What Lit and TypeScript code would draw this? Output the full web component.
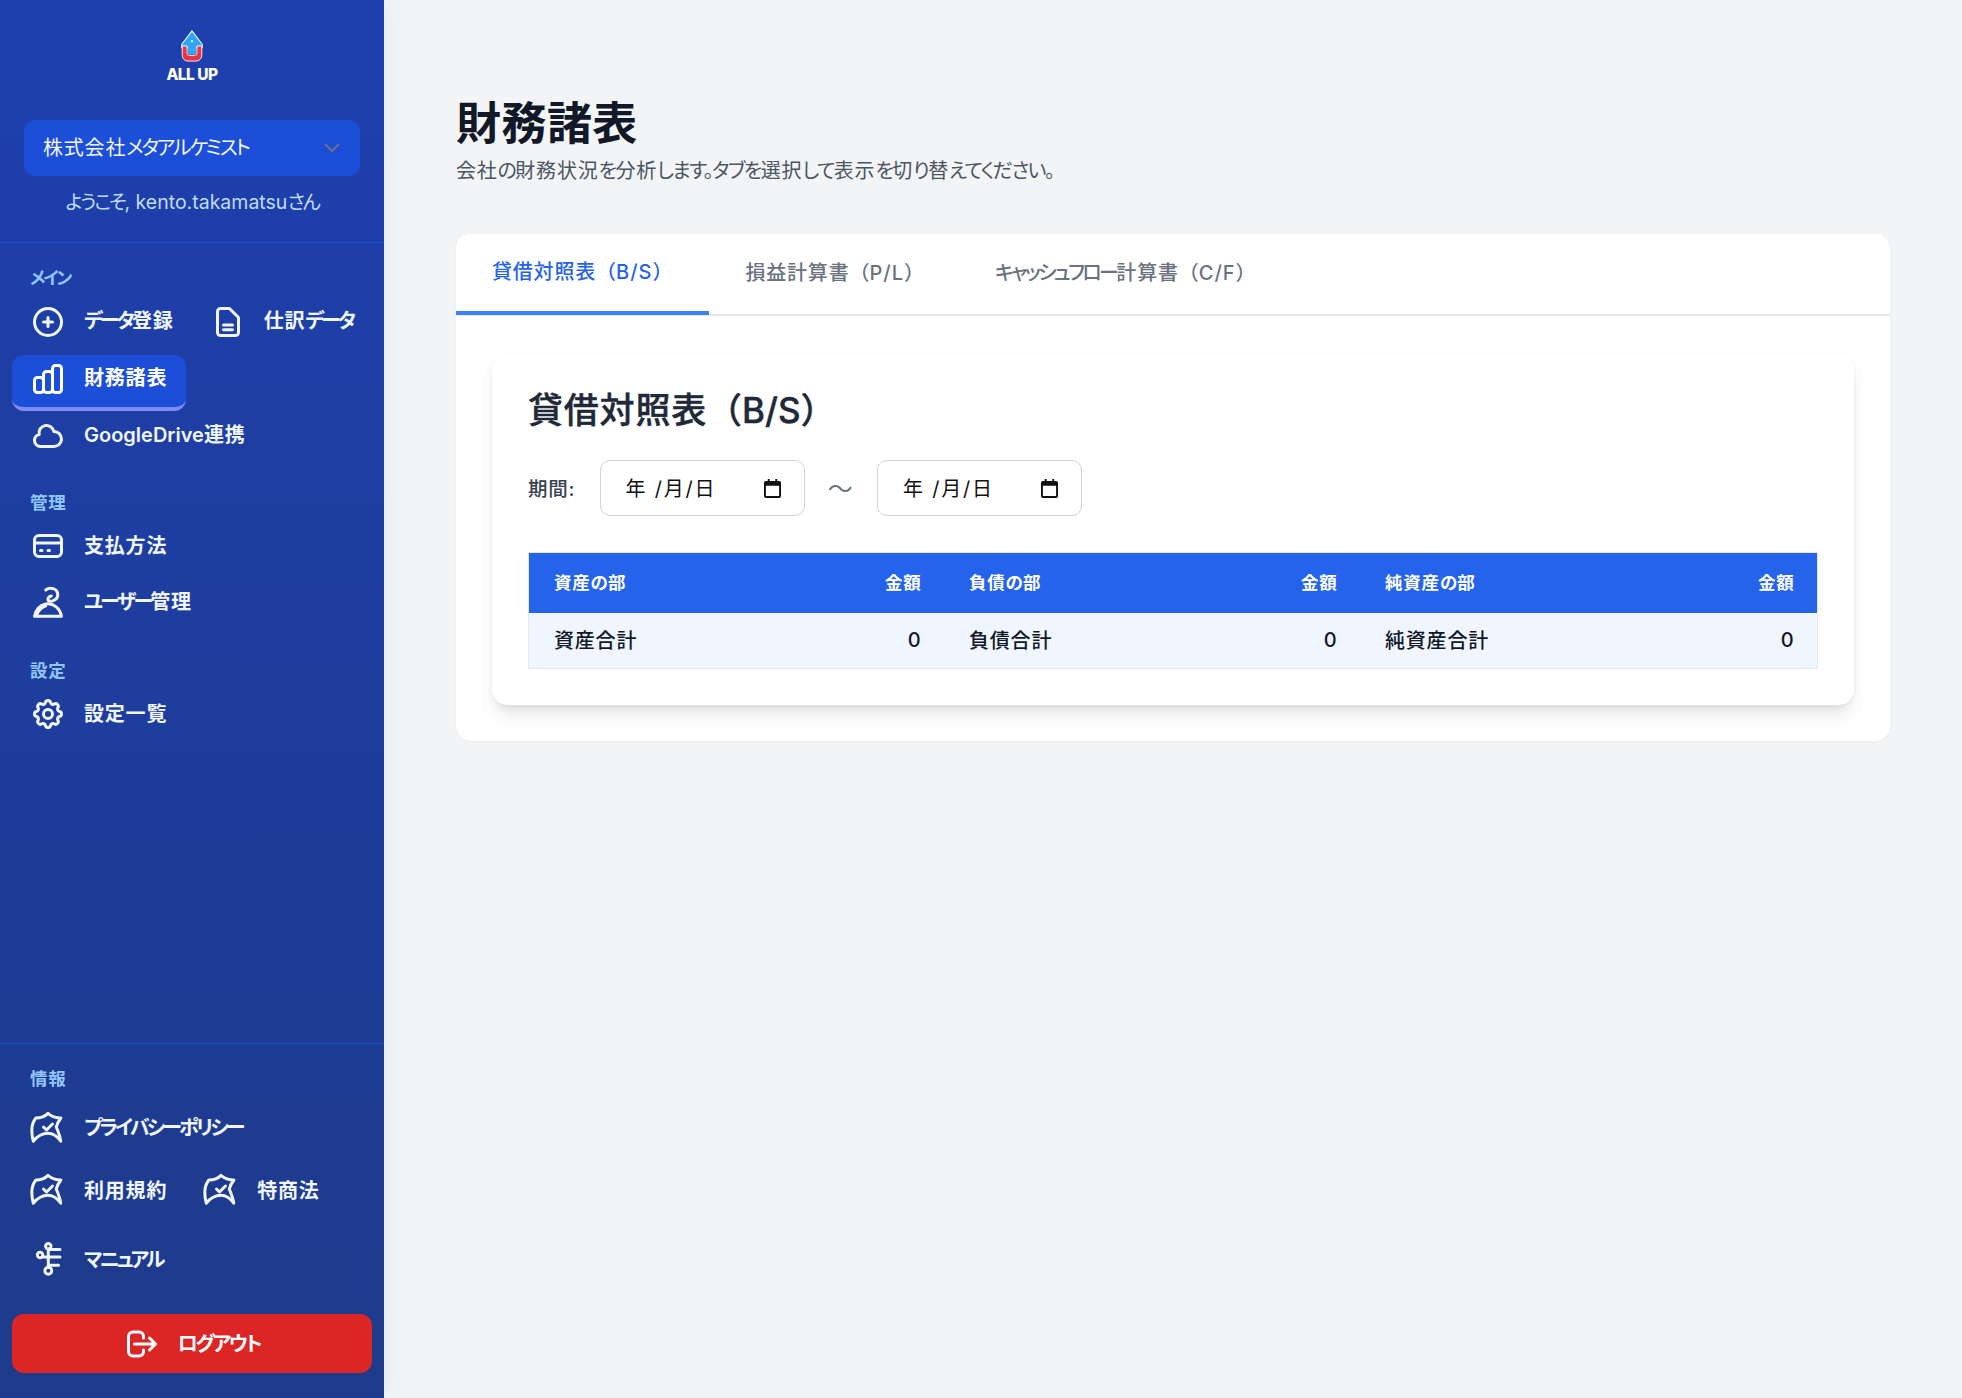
import { LitElement, html, css, svg } from "lit";
import { customElement } from "lit/decorators.js";

const shield = svg`<path d="M20.6 6C17 6 14.500 5 12 2.900 10 5 7 6 3.900 6 2 8.500 1.200 11 1.200 14c0 3 .4 5.500 1 7.500C5 18 8.500 16.200 12 16.200c3 0 6 1.800 8.500 5.300-.5-3.500-1.500-6-3-9.500.5-2.200 1.700-4.200 3.100-6z"/><path d="M9 12l2 2 4-4"/>`;

const icons: Record<string, any> = {
  plus: svg`<path d="M12 9v3m0 0v3m0-3h3m-3 0H9m12 0a9 9 0 11-18 0 9 9 0 0118 0z"/>`,
  doc: svg`<path d="M9 14h6m-6 3.200h6M17 21H7a2 2 0 01-2-2V5a2 2 0 012-2h5.586a1 1 0 01.707.293l5.414 5.414a1 1 0 01.293.707V19a2 2 0 01-2 2z"/>`,
  chart: svg`<path d="M9 19v-6a2 2 0 00-2-2H5a2 2 0 00-2 2v6a2 2 0 002 2h2a2 2 0 002-2zm0 0V9a2 2 0 012-2h2a2 2 0 012 2v10m-6 0a2 2 0 002 2h2a2 2 0 002-2m0 0V5a2 2 0 012-2h2a2 2 0 012 2v14a2 2 0 01-2 2h-2a2 2 0 01-2-2z"/>`,
  cloud: svg`<path d="M3 15a4 4 0 004 4h9a5 5 0 10-.1-9.999 5.002 5.002 0 10-9.780 2.096A4.001 4.001 0 003 15z"/>`,
  card: svg`<path d="M3 10h18M7 15h1m4 0h1m-7 4h12a3 3 0 003-3V8a3 3 0 00-3-3H6a3 3 0 00-3 3v8a3 3 0 003 3z"/>`,
  user: svg`<path d="M10.500 4C13 2 18.300 2.500 18.500 7c.1 3-3 4.900-5.800 4.400-1.300-.7-.8-3.100 1.500-3.400"/><path d="M3 21.500c.8-4.500 4-7.300 7.500-8.200 5-1 9.500 3 10.500 8.200zM4.500 20.500c1.200-3 3-5 6-6"/>`,
  gear: svg`<path d="M10.325 4.317c.426-1.756 2.924-1.756 3.350 0a1.724 1.724 0 002.573 1.066c1.543-.94 3.310.826 2.370 2.370a1.724 1.724 0 001.065 2.572c1.756.426 1.756 2.924 0 3.350a1.724 1.724 0 00-1.066 2.573c.94 1.543-.826 3.310-2.370 2.370a1.724 1.724 0 00-2.572 1.065c-.426 1.756-2.924 1.756-3.350 0a1.724 1.724 0 00-2.573-1.066c-1.543.94-3.310-.826-2.370-2.370a1.724 1.724 0 00-1.065-2.572c-1.756-.426-1.756-2.924 0-3.350a1.724 1.724 0 001.066-2.573c-.94-1.543.826-3.310 2.370-2.370.996.608 2.296.07 2.572-1.065z"/><path d="M15 12a3 3 0 11-6 0 3 3 0 016 0z"/>`,
  shield,
  manual: svg`<circle cx="12.200" cy="3.500" r="1.800"/><circle cx="6.700" cy="9.300" r="1.800"/><circle cx="12.200" cy="19.800" r="2.300"/><path d="M12.200 5.300v12.200M13.300 5.600H20M8.800 10.600H20M13.300 16.200H19"/>`,
  logout: svg`<path d="M17 16l4-4m0 0l-4-4m4 4H7m6 4v1a3 3 0 01-3 3H6a3 3 0 01-3-3V7a3 3 0 013-3h4a3 3 0 013 3v1"/>`,
};

const ic = (name: string) =>
  html`<svg class="ic" viewBox="0 0 24 24" fill="none" stroke="currentColor" stroke-width="2" stroke-linecap="round" stroke-linejoin="round">${icons[name]}</svg>`;

const calendar = html`<svg class="cal" viewBox="0 0 18 20"><path fill="#111" d="M4 0h2v2h6V0h2v2h2a2 2 0 012 2v14a2 2 0 01-2 2H2a2 2 0 01-2-2V4a2 2 0 012-2h2zM2 7v11h14V7z"/></svg>`;

/* The reference face sets kana tight and kanji slightly open: runs get their own tracking. */
const jp = (text: string) =>
  (text.match(/[\u3000-\u30ff]+|[\x20-\x7e]+|[（）]+|[^\u3000-\u30ff\x20-\x7e（）]+/g) || []).map((run) => {
    if (/^[\u3000-\u30ff]/.test(run)) return html`<span class="k">${run}</span>`;
    if (/^[\x20-\x7e]/.test(run)) return html`<span class="l">${run}</span>`;
    if (/^[（）]/.test(run)) return html`<span class="f">${run}</span>`;
    return run;
  });

@customElement("app-root")
export class AppRoot extends LitElement {
  static styles = css`
    :host {
      display: block;
      font-family: Inter, "Noto Sans CJK JP", sans-serif;
      font-feature-settings: "palt";
      letter-spacing: 0.05em;
      color: #111827;
    }
    * { box-sizing: border-box; }
    .k { letter-spacing: -0.11em; }
    .l { letter-spacing: 0; }
    .f { font-feature-settings: normal; letter-spacing: 0; }
    .layout { display: flex; height: 1398px; background: #f3f4f6; overflow: hidden; }

    .sidebar {
      width: 384px;
      flex: none;
      display: flex;
      flex-direction: column;
      color: #fff;
      background: linear-gradient(180deg, #1e40af 0%, #1e3a8a 100%);
      box-shadow: 0 0 30px rgba(0, 0, 0, 0.06);
    }
    .head {
      height: 243px;
      padding: 30px 24px 0;
      border-bottom: 1px solid #1d4ed8;
      display: flex;
      flex-direction: column;
      align-items: stretch;
    }
    .logo { height: 54px; display: flex; flex-direction: column; align-items: center; margin-bottom: 36px; }
    .logo svg { width: 26px; height: 36px; display: block; margin-bottom: 4px; }
    .logo span { font-size: 15.5px; line-height: 18px; font-weight: 800; letter-spacing: -0.5px; color: #fff; }
    .select {
      height: 56px;
      background: #1d4ed8;
      border-radius: 12px;
      padding: 0 20px 0 19px;
      display: flex;
      align-items: center;
      justify-content: space-between;
      font-size: 20px;
      color: #eff6ff;
    }
    .select > span { padding-bottom: 4px; }
    .select svg { width: 16px; height: 10px; }
    .welcome { margin-top: 14px; line-height: 25px; text-align: center; font-size: 19.5px; color: #bfdbfe; }

    .nav { flex: 1; padding-top: 25px; }
    .label {
      height: 20px;
      line-height: 20px;
      margin: 0 0 5px 30px;
      font-size: 17.5px;
      font-weight: 600;
      color: #93c5fd;
    }
    .label .k { letter-spacing: -0.14em; }
    .label.l1 { margin-top: 29px; margin-bottom: 5px; }
    .label.l2 { margin-top: 31px; margin-bottom: 5px; }
    .row { display: flex; padding-left: 12px; }
    .item {
      height: 57px;
      padding: 0 18px;
      display: flex;
      align-items: center;
      gap: 18px;
      font-size: 20px;
      font-weight: 600;
      color: #eff6ff;
      white-space: nowrap;
    }
    .item > span { padding-bottom: 4px; }
    .item .k { letter-spacing: -0.14em; }
    .item.active {
      height: 56.7px;
      margin: 4.5px 0 -4.2px;
      padding: 0 19px 4.7px 18px;
      background: #1d4ed8;
      border-bottom: 4px solid #818cf8;
      border-radius: 12px;
      color: #fff;
    }
    .item.h56 { height: 56px; }
    .ic { width: 36px; height: 36px; flex: none; overflow: visible; display: block; }

    .foot { border-top: 1px solid #1d4ed8; padding: 25px 0 25px; }
    .foot .label { margin-bottom: 6.5px; }
    .item.s1 { height: 63px; }
    .item.s1 > span { padding-bottom: 2px; }
    .item.s2 { height: 61.2px; }
    .item.s2 > span { padding-bottom: 0; }
    .item.s3 { height: 77.5px; }
    .item.s3 > span { padding-bottom: 0; }
    .logout {
      margin: 16.5px 12px 0;
      height: 59px;
      background: #dc2626;
      border-radius: 12px;
      display: flex;
      align-items: center;
      justify-content: center;
      gap: 18px;
      font-size: 20px;
      font-weight: 600;
      color: #fff;
    }
    .logout > span { padding-bottom: 2px; }

    .main { flex: 1; padding: 92px 72px 0; min-width: 0; }
    h1 { margin: 0; font-size: 45px; line-height: 63px; font-weight: 700; color: #111827; letter-spacing: 0.01em; }
    .sub { margin: 0.5px 0 0; font-size: 20px; line-height: 30px; color: #4b5563; }
    .sub .k { letter-spacing: -0.08em; }
    .panel {
      margin-top: 48.5px;
      background: #fff;
      border-radius: 15px;
      box-shadow: 0 1px 3px rgba(0, 0, 0, 0.04);
      padding-bottom: 36px;
    }
    .tabs { display: flex; height: 82px; border-bottom: 2px solid #e5e7eb; }
    .tab {
      height: 81px;
      padding: 0 37px 7px 36px;
      display: flex;
      align-items: center;
      font-size: 20px;
      font-weight: 500;
      color: #6b7280;
      white-space: nowrap;
    }
    .tab:nth-child(2) { padding-right: 35px; }
    .tab .l { letter-spacing: 1px; }
    .tab .k { letter-spacing: -0.13em; }
    .tab.on { color: #2563eb; border-bottom: 4px solid #3b82f6; padding-bottom: 4px; }
    .inner {
      margin: 38px 36px 0;
      padding: 30px 36px 36px;
      background: #fff;
      border-radius: 15px;
      box-shadow: 0 12.5px 19px -4px rgba(0, 0, 0, 0.1), 0 5px 7.5px -2.5px rgba(0, 0, 0, 0.05), 0 0 4px rgba(0, 0, 0, 0.04);
    }
    h2 { margin: 0; font-size: 35px; line-height: 52px; font-weight: 500; color: #1f2937; -webkit-text-stroke: 0.4px #1f2937; }
    .dates { margin-top: 24px; height: 56px; display: flex; align-items: center; }
    .dates label { width: 71.5px; padding-bottom: 2px; font-size: 19.5px; font-weight: 500; color: #374151; }
    .date {
      width: 205px;
      height: 56px;
      border: 1.5px solid #d1d5db;
      border-radius: 10px;
      padding: 0 23px 0 25px;
      display: flex;
      align-items: center;
      justify-content: space-between;
      font-size: 20px;
      color: #111;
    }
    .date span { padding-bottom: 2px; letter-spacing: 1.8px; }
    .cal { width: 17px; height: 19px; display: block; }
    .tilde { width: 72.5px; padding-bottom: 3px; text-align: center; font-size: 25px; color: #6b7280; }
    .table {
      margin-top: 36px;
      display: grid;
      grid-template-columns: 329px 86px 330px 86px 371px 86px;
      border: 1px solid #e5e7eb;
    }
    .th, .td { padding: 0 25px; display: flex; align-items: center; white-space: nowrap; }
    .th { height: 60px; padding-bottom: 4px; background: #2563eb; color: #fff; font-size: 17.5px; font-weight: 600; }
    .th .k { letter-spacing: 0; }
    .td { height: 55px; padding-bottom: 2px; background: #eff6ff; font-size: 20px; font-weight: 500; color: #111827; }
    .r { justify-content: flex-end; padding-right: 22.5px; }
  `;

  render() {
    const item = (icon: string, text: string, cls = "") =>
      html`<div class="item ${cls}">${ic(icon)}<span>${jp(text)}</span></div>`;
    const dateBox = html`<div class="date"><span>年 /月/日</span>${calendar}</div>`;
    return html`
      <div class="layout">
        <aside class="sidebar">
          <div class="head">
            <div class="logo">
              <svg viewBox="0 0 26 36">
                <path d="M13 1L24.500 16V20H1.500V16Z" fill="#2ea6ff" stroke="#fff" stroke-width="1.200" stroke-linejoin="round"/>
                <path d="M2 18h5.500v8c0 1.500 1 2.500 2.500 2.500h6c1.500 0 2.500-1 2.500-2.500V18H24v10.500a6.500 6.500 0 01-6.500 6.500h-9A6.500 6.500 0 012 28.500z" fill="#ef3340" stroke="#fff" stroke-width="1"/>
                <path d="M8.500 17h9v10.500h-9z" fill="#2ea6ff"/>
                <circle cx="13" cy="12.500" r="1.300" fill="#fff"/>
              </svg>
              <span>ALL UP</span>
            </div>
            <div class="select">
              <span>${jp("株式会社メタアルケミスト")}</span>
              <svg viewBox="0 0 16 10" fill="none" stroke="#6b7280" stroke-width="2" stroke-linecap="round" stroke-linejoin="round"><path d="M1.500 1.500L8 8l6.500-6.500"/></svg>
            </div>
            <div class="welcome">${jp("ようこそ, kento.takamatsuさん")}</div>
          </div>
          <div class="nav">
            <div class="label">${jp("メイン")}</div>
            <div class="row">${item("plus", "データ登録")}${item("doc", "仕訳データ")}</div>
            <div class="row">${item("chart", "財務諸表", "active")}</div>
            <div class="row">${item("cloud", "GoogleDrive連携")}</div>
            <div class="label l1">管理</div>
            <div class="row">${item("card", "支払方法", "h56")}</div>
            <div class="row">${item("user", "ユーザー管理", "h56")}</div>
            <div class="label l2">設定</div>
            <div class="row">${item("gear", "設定一覧", "h56")}</div>
          </div>
          <div class="foot">
            <div class="label">情報</div>
            <div class="row">${item("shield", "プライバシーポリシー", "s1")}</div>
            <div class="row">${item("shield", "利用規約", "s2")}${item("shield", "特商法", "s2")}</div>
            <div class="row">${item("manual", "マニュアル", "s3")}</div>
            <div class="logout">${ic("logout")}<span>${jp("ログアウト")}</span></div>
          </div>
        </aside>
        <main class="main">
          <h1>財務諸表</h1>
          <p class="sub">${jp("会社の財務状況を分析します。タブを選択して表示を切り替えてください。")}</p>
          <section class="panel">
            <div class="tabs">
              <div class="tab on"><span>${jp("貸借対照表（B/S）")}</span></div>
              <div class="tab"><span>${jp("損益計算書（P/L）")}</span></div>
              <div class="tab"><span>${jp("キャッシュフロー計算書（C/F）")}</span></div>
            </div>
            <div class="inner">
              <h2>${jp("貸借対照表（B/S）")}</h2>
              <div class="dates">
                <label>${jp("期間:")}</label>
                ${dateBox}
                <div class="tilde">〜</div>
                ${dateBox}
              </div>
              <div class="table">
                <div class="th"><span>${jp("資産の部")}</span></div><div class="th r">金額</div>
                <div class="th"><span>${jp("負債の部")}</span></div><div class="th r">金額</div>
                <div class="th"><span>${jp("純資産の部")}</span></div><div class="th r">金額</div>
                <div class="td">資産合計</div><div class="td r">0</div>
                <div class="td">負債合計</div><div class="td r">0</div>
                <div class="td">純資産合計</div><div class="td r">0</div>
              </div>
            </div>
          </section>
        </main>
      </div>
    `;
  }
}
